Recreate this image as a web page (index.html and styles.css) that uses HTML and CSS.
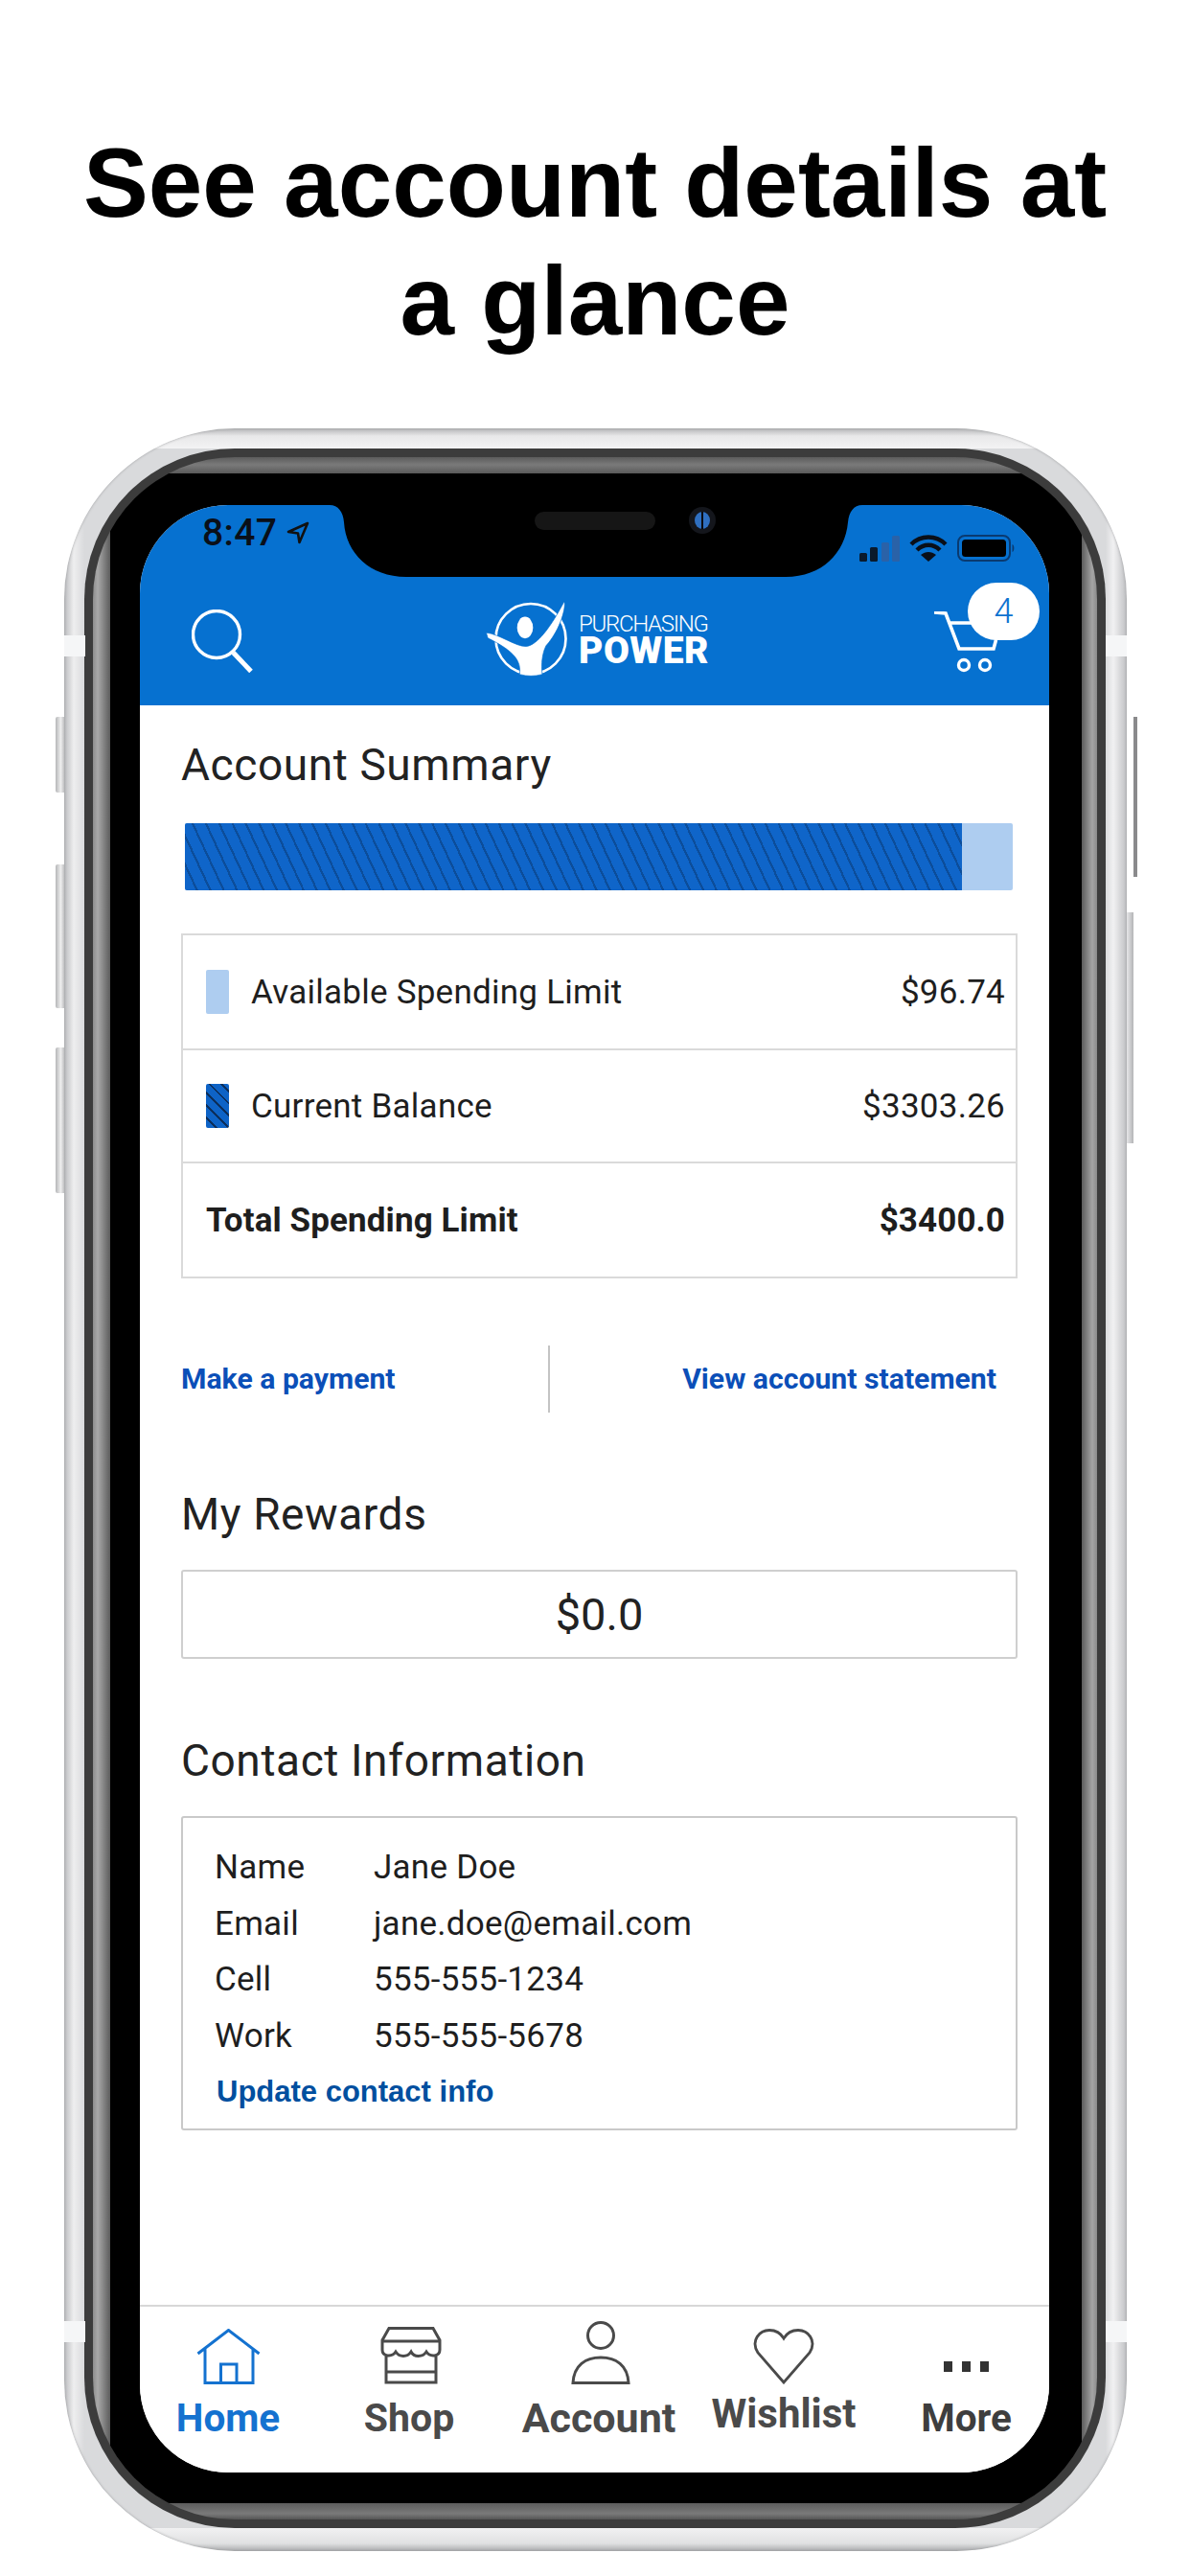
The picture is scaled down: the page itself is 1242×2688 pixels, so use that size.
FILE: index.html
```html
<!DOCTYPE html>
<html lang="en">
<head>
<meta charset="utf-8">
<title>See account details at a glance</title>
<link rel="stylesheet" href="styles.css">
</head>
<body>
<h1 class="headline">See account details at<br>a glance</h1>
<div class="phone">
  <span class="band band-l band-1"></span><span class="band band-r band-1"></span>
  <span class="band band-l band-2"></span><span class="band band-r band-2"></span>
  <span class="btn btn-left btn-a"></span><span class="btn btn-left btn-b"></span><span class="btn btn-left btn-c"></span>
  <span class="btn btn-right-thin"></span><span class="btn btn-right"></span>
  <div class="bezel"><div class="rim"><div class="glass"><div class="screen">
    <header class="header">
      <svg class="notch" viewBox="0 0 556 80" width="556" height="80">
        <path d="M0 0 C9 0 14 7 15 18 C17 50 42 75 80 75 L476 75 C514 75 538 50 541 18 C542 7 547 0 556 0 Z" fill="#000"/>
        <rect x="214" y="7" width="126" height="19" rx="9.500" fill="#161616"/>
        <circle cx="389" cy="16" r="14" fill="#14161c"/>
        <ellipse cx="389" cy="16" rx="8" ry="9" fill="#2f6fc0"/>
        <rect x="388" y="7" width="2" height="18" fill="#0a0a0a"/>
      </svg>
      <div class="status">
        <div class="clock">
          <span class="time">8:47</span>
          <svg class="loc" viewBox="0 0 24 24" width="24" height="24"><path d="M22 2 L2 11 L12 12.500 L13.500 22 Z" fill="none" stroke="#111" stroke-width="2.600" stroke-linejoin="round"/></svg>
        </div>
        <div class="sys">
          <svg viewBox="0 0 42 27" width="42" height="27"><rect x="0" y="18" width="8" height="9" rx="1.500" fill="#0a1a2c"/><rect x="11" y="12" width="8" height="15" rx="1.500" fill="#0a1a2c"/><rect x="23" y="7" width="8" height="20" rx="1.500" fill="#2a62a8"/><rect x="34" y="0" width="8" height="27" rx="1.500" fill="#2a62a8"/></svg>
          <svg viewBox="0 0 40 28" width="40" height="28"><path d="M2 10 C12 0 28 0 38 10" fill="none" stroke="#0a0f18" stroke-width="4.400"/><path d="M8 16 C15 9 25 9 32 16" fill="none" stroke="#0a0f18" stroke-width="4.400"/><path d="M20 28 L12 21 C17 17 23 17 28 21 Z" fill="#0a0f18"/></svg>
          <svg viewBox="0 0 60 28" width="60" height="28"><rect x="1" y="1" width="54" height="26" rx="7" fill="none" stroke="#0a3a70" stroke-width="2"/><rect x="5" y="5" width="46" height="18" rx="3.500" fill="#000"/><path d="M57.500 10 C60 11 60 17 57.500 18 Z" fill="#0a3a70"/></svg>
        </div>
      </div>
      <div class="nav">
        <svg class="search" viewBox="0 0 64 66" width="64" height="66"><circle cx="26" cy="26" r="24.500" fill="none" stroke="#fff" stroke-width="3.400"/><path d="M43.500 45 L62 64.500" stroke="#fff" stroke-width="5" fill="none"/></svg>
        <div class="logo">
          <svg class="logo-mark" viewBox="130 75 270 250" width="90" height="83"><circle cx="280" cy="200" r="110" fill="none" stroke="#fff" stroke-width="8"/><ellipse cx="262" cy="165" rx="25" ry="34" fill="#fff"/><path d="M140 181 C180 185 235 226 265 224 C300 222 345 160 385 83 C392 95 375 170 328 222 C316 245 312 280 316 312 Q280 322 245 312 C250 270 230 240 145 198 Z" fill="#fff" stroke="#0671d0" stroke-width="2"/></svg>
          <div class="logo-text"><span class="logo-top">PURCHASING</span><span class="logo-bottom">POWER</span></div>
        </div>
        <div class="cart">
          <svg viewBox="0 0 66 64" width="66" height="64"><path d="M0 1 L12 2 L26 39 L62 39 L65 28 M16 12 L40 12" fill="none" stroke="#fff" stroke-width="3.600"/><circle cx="31" cy="56" r="5.500" fill="none" stroke="#fff" stroke-width="3.400"/><circle cx="53" cy="56" r="5.500" fill="none" stroke="#fff" stroke-width="3.400"/></svg>
          <span class="badge">4</span>
        </div>
      </div>
    </header>
    <main class="main">
      <h2 class="section-title first">Account Summary</h2>
      <div class="meter"><div class="meter-used"></div></div>
      <div class="summary">
        <div class="row"><span class="swatch swatch-light"></span><span class="row-label">Available Spending Limit</span><span class="row-value">$96.74</span></div>
        <div class="row"><span class="swatch swatch-dark"></span><span class="row-label">Current Balance</span><span class="row-value">$3303.26</span></div>
        <div class="row row-total"><span class="row-label">Total Spending Limit</span><span class="row-value">$3400.0</span></div>
      </div>
      <div class="links">
        <a class="link link-pay">Make a payment</a>
        <span class="links-rule"></span>
        <a class="link link-statement">View account statement</a>
      </div>
      <h2 class="section-title">My Rewards</h2>
      <div class="rewards">$0.0</div>
      <h2 class="section-title">Contact Information</h2>
      <div class="contact">
        <dl class="contact-grid">
          <dt>Name</dt><dd>Jane Doe</dd>
          <dt>Email</dt><dd>jane.doe@email.com</dd>
          <dt>Cell</dt><dd>555-555-1234</dd>
          <dt>Work</dt><dd>555-555-5678</dd>
        </dl>
        <a class="update">Update contact info</a>
      </div>
    </main>
    <nav class="tabs">
      <div class="tab tab-home">
        <svg viewBox="0 0 67 58" width="67" height="58"><path d="M1.500 26 L33.500 1.500 L65.500 26 M9 21 V56.500 H59 V21 M25.500 56.500 V37 H42 V56.500" fill="none" stroke="#1472d0" stroke-width="3"/></svg>
        <span>Home</span>
      </div>
      <div class="tab tab-shop">
        <svg viewBox="0 0 64 60" width="64" height="60"><path d="M9 1.500 H55 L62 14 V24 C62 31 52 32 48 26 C44 32 35 32 32 26 C28 32 20 32 16 26 C12 32 2 31 2 24 V14 Z M2 15 H62 M6 30 V58 H58 V30 M6 47 H58" fill="none" stroke="#4a4a4a" stroke-width="3"/></svg>
        <span>Shop</span>
      </div>
      <div class="tab tab-account">
        <svg viewBox="0 0 62 66" width="62" height="66"><circle cx="31" cy="15" r="13.500" fill="none" stroke="#4a4a4a" stroke-width="3"/><path d="M2 64.500 C3 46 15 38 31 38 C47 38 59 46 60 64.500 Z" fill="none" stroke="#4a4a4a" stroke-width="3"/></svg>
        <span>Account</span>
      </div>
      <div class="tab tab-wish">
        <svg viewBox="0 0 64 58" width="64" height="58"><path d="M32 56 L5 25 C-3 12 7 1.500 17 1.500 C24 1.500 29 5 32 10 C35 5 40 1.500 47 1.500 C57 1.500 67 12 59 25 Z" fill="none" stroke="#4a4a4a" stroke-width="2.800"/></svg>
        <span>Wishlist</span>
      </div>
      <div class="tab tab-more">
        <div class="dots"><i></i><i></i><i></i></div>
        <span>More</span>
      </div>
    </nav>
  </div></div></div></div>
</div>
</body>
</html>
```

FILE: styles.css
```css
* { box-sizing: border-box; }
html, body { margin: 0; padding: 0; background: #fff; }
body { width: 1242px; height: 2688px; overflow: hidden; font-family: Roboto, "Liberation Sans", sans-serif; color: #222; }

.headline {
  margin: 0; padding: 130px 0 0; height: 376px; text-align: center;
  font: 700 101.700px/123px "Liberation Sans", Arial, sans-serif; color: #000;
}

.phone {
  position: relative; width: 1109px; height: 2215px; margin: 71px 0 0 67px;
  padding: 21px 22px 24px 21px; border-radius: 178px;
  background:
    linear-gradient(180deg, #b4b5b7 0, #e8e8e9 8px, #f3f3f4 21px, transparent 21px, transparent calc(100% - 24px), #f1f1f2 calc(100% - 24px), #e0e1e2 calc(100% - 8px), #a9aaac 100%),
    linear-gradient(90deg, #bbbcbf 0, #eeeeef 10px, #d9dadc 21px, #d9dadc calc(100% - 22px), #f1f1f2 calc(100% - 14px), #bfc0c3 100%);
  box-shadow: inset 0 0 3px #9a9b9d;
}
.band { position: absolute; width: 22px; height: 22px; background: #f5f6f7; }
.band-l { left: 0; } .band-r { right: 0; }
.band-1 { top: 216px; } .band-2 { top: 1975px; }
.btn { position: absolute; }
.btn-left { left: -9px; width: 9px; background: linear-gradient(90deg, #b5b6b8, #eeeeee 60%, #c0c0c2); border-radius: 2px 0 0 2px; }
.btn-a { top: 301px; height: 79px; }
.btn-b { top: 455px; height: 150px; }
.btn-c { top: 646px; height: 152px; }
.btn-right { right: -7px; top: 505px; width: 7px; height: 241px; background: linear-gradient(90deg, #e6e6e8, #b4b5b7); }
.btn-right-thin { right: -11px; top: 301px; width: 4px; height: 167px; background: #8a8a8c; }

.bezel { height: 100%; padding: 9px; border-radius: 157px; background: #3c3c3c; }
.rim {
  height: 100%; padding: 17px 16px 17px 18px; border-radius: 148px;
  background:
    linear-gradient(90deg, #8d8d8d 0, #a9a9a9 5px, #5c5c5c 18px, transparent 18px, transparent calc(100% - 16px), #5c5c5c calc(100% - 16px), #a5a5a5 calc(100% - 5px), #8a8a8a 100%),
    linear-gradient(180deg, #5c5c5c 0, #7a7a7a 8px, #5a5a5a 17px, #000 17px, #000 calc(100% - 17px), #5d5d5d calc(100% - 17px), #7a7a7a calc(100% - 6px), #555 100%);
}
.glass { height: 100%; padding: 33px 34px 32px 31px; border-radius: 130px; background: #000; }
.screen { display: flex; flex-direction: column; height: 100%; overflow: hidden; border-radius: 92px; background: #fff; }

.header { position: relative; flex: none; height: 209px; background: #0671d0; }
.notch { position: absolute; left: 198px; top: 0; }
.status { display: flex; justify-content: space-between; align-items: flex-start; height: 77px; padding: 9px 36px 0 65px; }
.clock { display: flex; align-items: center; gap: 10px; }
.time { font: 500 39px/40px Roboto, sans-serif; letter-spacing: .4px; color: #0a0f18; }
.sys { display: flex; align-items: center; gap: 10px; padding-top: 22px; }
.nav { display: flex; align-items: flex-start; padding: 32px 0 0 54px; }
.logo { display: flex; align-items: flex-start; margin: -11px 0 0 240px; }
.logo-text { display: flex; flex-direction: column; margin: 15px 0 0 10px; color: #fff; }
.logo-top { font: 300 24px/23px Roboto, sans-serif; letter-spacing: -1.300px; }
.logo-bottom { font: 900 39px/32px Roboto, sans-serif; letter-spacing: .5px; }
.cart { position: relative; margin: 2px 54px 0 auto; width: 66px; height: 64px; }
.badge {
  position: absolute; left: 35px; top: -30px; width: 75px; height: 60px; border-radius: 30px;
  background: #fff; color: #0e72d0; font: 300 36px/60px Roboto, sans-serif; text-align: center;
}

.main { flex: 1; min-height: 0; padding: 36px 33px 0 43px; }
.section-title { margin: 80px 0 0; font: 400 46px/52px Roboto, sans-serif; letter-spacing: .6px; color: #222; }
.section-title.first { margin-top: 0; }
.meter { height: 70px; margin: 35px 5px 0 4px; background: #aecdf0; border-radius: 2px; }
.meter-used {
  width: 811px; height: 100%; border-radius: 2px 0 0 2px;
  background: repeating-linear-gradient(65deg, #0f65c9 0, #0f65c9 10.400px, #0c4d9a 10.400px, #0c4d9a 12.600px);
}
.summary { margin-top: 45px; border: 2px solid #dadada; }
.row { display: flex; align-items: center; height: 118px; padding: 0 11px 0 24px; font-size: 35px; letter-spacing: .25px; color: #1e1e1e; }
.row + .row { border-top: 2px solid #dadada; }
.swatch { flex: none; width: 24px; height: 46px; margin-right: 23px; border-radius: 2px; }
.swatch-light { background: #aecdf0; }
.swatch-dark { background: repeating-linear-gradient(45deg, #0e63c6 0, #0e63c6 7px, #0c2f5c 7px, #0c2f5c 9px); }
.row-value { margin-left: auto; }
.row-total { height: 120px; font-weight: 700; letter-spacing: .1px; }
.links { display: flex; align-items: center; justify-content: space-between; height: 70px; margin-top: 70px; padding-right: 22px; }
.link { font: 700 30.200px/36px Roboto, sans-serif; color: #0b4fb8; }
.link-pay { width: 383px; }
.links-rule { width: 2px; height: 70px; background: #c4c4c4; }
.link-statement { margin-left: auto; }
.rewards {
  height: 93px; margin-top: 32px; border: 2px solid #cfcfcf; border-radius: 3px;
  font: 400 47px/89px Roboto, sans-serif; text-align: center; color: #222;
}
.section-title + .contact { margin-top: 32px; }
.contact { height: 328px; padding: 23px 34px 0 33px; border: 2px solid #c9c9c9; border-radius: 3px; }
.contact-grid { display: grid; grid-template-columns: 166px 1fr; grid-auto-rows: 58.600px; margin: 0; font-size: 35px; letter-spacing: .25px; line-height: 58.600px; color: #1e1e1e; }
.contact-grid dt, .contact-grid dd { margin: 0; }
.update { display: block; margin: 0 0 0 2px; font: 700 31px/58px "Liberation Sans", Arial, sans-serif; color: #004f9f; }

.tabs {
  flex: none; display: grid; grid-template-columns: 184px 194px 202px 184px 185px; height: 175px;
  border-top: 2px solid #d8d8d8; background: #fff;
}
.tab { display: flex; flex-direction: column; align-items: center; justify-content: flex-end; height: 139px; font: 700 40.500px/46px Roboto, sans-serif; color: #4a4a4a; }
.tab span { display: block; margin-top: 12px; }
.tab-home { color: #1472d0; }
.tab-shop { font-size: 41px; }
.tab-shop svg { margin-left: 4px; }
.tab-account { font-size: 43px; }
.tab-account svg { margin-left: 4px; }
.tab-more { color: #3e3e3e; padding-left: 12px; }
.tab-wish { font-size: 42px; padding-bottom: 4px; }
.tab-wish span { margin-top: 8px; }
.dots { display: flex; gap: 10px; margin-bottom: 13px; }
.dots i { display: block; width: 9px; height: 11px; background: #333; }
```
